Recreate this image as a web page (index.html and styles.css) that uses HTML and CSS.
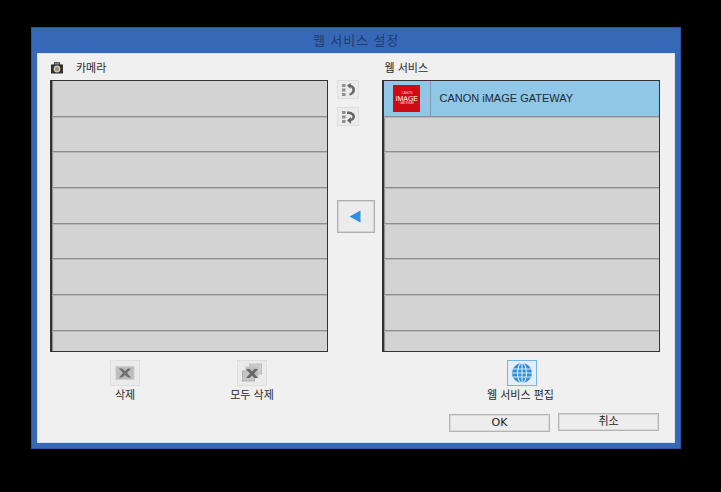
FILE: index.html
```html
<!DOCTYPE html>
<html lang="ko">
<head>
<meta charset="utf-8">
<title>웹 서비스 설정</title>
<link rel="stylesheet" href="styles.css">
</head>
<body>
<div class="window">
  <div class="titlebar">웹 서비스 설정</div>
  <div class="client">
    <div class="panes">
      <section class="pane">
        <div class="pane-label">
          <svg class="cam" width="14" height="13" viewBox="0 0 14 13"><path d="M1 3.500h2.500l1-2.500h5l1 2.500H13v9H1z" fill="#2e2e2e"/><path d="M5 1.500h4l.7 2H4.300z" fill="#888"/><circle cx="7" cy="8" r="3.400" fill="#c4c4c4"/><circle cx="7" cy="8" r="2" fill="#a8905f"/></svg>
          <span>카메라</span>
        </div>
        <div class="list">
          <div class="row"></div><div class="row"></div><div class="row"></div><div class="row"></div>
          <div class="row"></div><div class="row"></div><div class="row"></div><div class="row row-last"></div>
        </div>
      </section>
      <div class="middle">
        <div class="small-buttons">
          <div class="small-btn">
            <svg width="16" height="14" viewBox="0 0 16 14"><path d="M2 1h3.500v3H2zM2 5.500h3.500v3H2zM2 10h3.500v3H2z" fill="#8f8f8f"/><path d="M7 2.500 10.500 0v1.700c2.800.5 4.500 2.400 4.500 5 0 2.800-2 5-5.500 6V10.500c1.800-.7 2.800-2 2.800-3.800 0-1.400-.7-2.400-1.800-2.800V6z" fill="#666"/></svg>
          </div>
          <div class="small-btn">
            <svg width="16" height="14" viewBox="0 0 16 14"><path d="M2 1h3.500v3H2zM2 5.500h3.500v3H2zM2 10h3.500v3H2z" fill="#8f8f8f"/><path d="M7 1.500c4.500-.3 8 1.800 8 5 0 2.300-1.500 4-4 4.700V14L7 10.500 11 7v1.800c.9-.5 1.400-1.300 1.400-2.300 0-1.600-2.200-2.700-5.400-2.500z" fill="#666"/></svg>
          </div>
        </div>
        <div class="move-btn"><svg width="12" height="13" viewBox="0 0 12 13"><path d="M0.500 6.500 11.500 .5v12z" fill="#2f8fdc"/></svg></div>
      </div>
      <section class="pane pane-right">
        <div class="pane-label"><span>웹 서비스</span></div>
        <div class="list">
          <div class="row row-selected">
            <div class="logo-cell"><div class="logo"><span class="logo-top">CANON</span><span class="logo-main">iMAGE</span><span class="logo-top">GATEWAY</span></div></div>
            <div class="service-name">CANON iMAGE GATEWAY</div>
          </div>
          <div class="row"></div><div class="row"></div><div class="row"></div>
          <div class="row"></div><div class="row"></div><div class="row"></div><div class="row row-last"></div>
        </div>
      </section>
    </div>
    <div class="tools">
      <div class="tool tool-delete">
        <div class="tool-icon">
          <svg width="20" height="16" viewBox="0 0 20 16"><rect x="1" y="1.500" width="18" height="13" fill="#bdbdbd" stroke="#cbcbcb"/><path d="M4 3.500h3L10 6l3-2.500h3L12 8l4 4.500h-3L10 10l-3 2.500H4L8 8z" fill="#6e6e6e"/></svg>
        </div>
        <div class="tool-label">삭제</div>
      </div>
      <div class="tool tool-delete-all">
        <div class="tool-icon">
          <svg width="22" height="20" viewBox="0 0 22 20"><rect x="8.500" y="1" width="12" height="10" fill="#cdcdcd" stroke="#bdbdbd"/><rect x="5" y="4" width="12" height="10" fill="#bdbdbd" stroke="#c6c6c6"/><rect x="1.500" y="8" width="12" height="10" fill="#c6c6c6" stroke="#b0b0b0"/><path d="M5 6h3.500L11 8.500 13.500 6H17l-4 4.500 4 4.500h-3.500L11 12.500 8.500 15H5l4-4.500z" fill="#666"/></svg>
        </div>
        <div class="tool-label">모두 삭제</div>
      </div>
      <div class="tool tool-edit">
        <div class="tool-icon tool-icon-active">
          <svg width="22" height="22" viewBox="0 0 22 22"><circle cx="11" cy="11" r="10" fill="#2f8fd8"/><g fill="none" stroke="#d6ecfa" stroke-width="1.100"><ellipse cx="11" cy="11" rx="4.500" ry="10"/><path d="M11 1v20M1.800 7h18.400M1 11h20M1.800 15h18.400"/></g></svg>
        </div>
        <div class="tool-label tool-label-edit">웹 서비스 편집</div>
      </div>
    </div>
    <div class="actions">
      <button class="btn btn-ok" type="button">OK</button>
      <button class="btn btn-cancel" type="button">취소</button>
    </div>
  </div>
</div>
</body>
</html>
```
FILE: styles.css
```css
* { box-sizing: border-box; }
html, body { margin: 0; height: 100%; }
body {
  background: #000;
  padding: 27px 0 0 31px;
  font-family: "Noto Sans CJK KR", "Liberation Sans", sans-serif;
  font-size: 11px;
  color: #2a2a2a;
}
.window {
  width: 650px;
  height: 422px;
  background: #3768b8;
  border: 1px solid #2a57a0;
  padding: 0 5px 5px;
  display: flex;
  flex-direction: column;
}
.titlebar {
  height: 25px;
  line-height: 23px;
  text-align: center;
  font-size: 13px;
  color: #1f3c6c;
  letter-spacing: .9px;
}
.client {
  flex: 1;
  background: #f0f0f0;
  border: 1px solid #d9dfe9;
  padding: 0 14px 0 12px;
  display: flex;
  flex-direction: column;
}
.panes { display: flex; }
.pane { width: 278px; }
.pane-right { width: 278px; }
.pane-label {
  height: 26px;
  display: flex;
  align-items: center;
  font-size: 11px;
  line-height: 14px;
}
.pane-right .pane-label { padding-left: 2px; }
.cam { margin-right: 12px; }
.list {
  height: 272px;
  border: 1px solid #333;
  border-left-width: 2px;
  background: #d3d3d3;
  overflow: hidden;
  box-shadow: inset 2px 0 1px -1px #8a8a8a;
}
.row {
  height: 35.700px;
  border-bottom: 1px solid #8e8e8e;
  box-shadow: 0 1px 0 #b8b8b8;
  display: flex;
}
.row-last { border-bottom: 0; box-shadow: none; }
.row-selected { background: #90c6e6; }
.logo-cell {
  width: 47px;
  border-right: 1px solid #7f9db3;
  display: flex;
  align-items: center;
  padding-left: 9px;
}
.logo {
  width: 27px;
  height: 27px;
  background: #cf0a12;
  color: #f6d6d6;
  display: flex;
  flex-direction: column;
  align-items: center;
  justify-content: center;
  font-family: "Liberation Sans", sans-serif;
  line-height: 5px;
}
.logo-top { font-size: 3px; }
.logo-main { font-size: 7px; color: #fff; }
.service-name {
  padding-left: 8px;
  font-family: "Liberation Sans", sans-serif;
  font-size: 11px;
  line-height: 34px;
  color: #1d2a33;
}
.middle {
  width: 55px;
  padding: 26px 0 0 9px;
}
.small-buttons { display: flex; flex-direction: column; gap: 8px; }
.small-btn {
  width: 22px;
  height: 19px;
  background: #ebebeb;
  border: 1px solid #dedede;
  display: flex;
  align-items: center;
  justify-content: center;
}
.move-btn {
  width: 38px;
  height: 33px;
  margin-top: 74px;
  padding-right: 2px;
  background: #ececec;
  border: 1px solid #b0b0b0;
  box-shadow: inset 0 0 0 1px #d4d4d4;
  display: flex;
  align-items: center;
  justify-content: center;
}
.tools {
  display: flex;
  padding-top: 8px;
  height: 61px;
}
.tool {
  display: flex;
  flex-direction: column;
  align-items: center;
  width: 80px;
}
.tool-delete { margin-left: 35px; }
.tool-delete-all { margin-left: 47px; }
.tool-edit { margin-left: 175px; width: 110px; }
.tool-icon {
  width: 30px;
  height: 26px;
  background: #ebebeb;
  border: 1px solid #dedede;
  display: flex;
  align-items: center;
  justify-content: center;
}
.tool-icon-active {
  background: #e3eef8;
  border: 1px solid #6fb6ee;
}
.tool-label {
  line-height: 16px;
  font-size: 11px;
}
.tool-label-edit { margin-right: 3px; }
.actions {
  display: flex;
  justify-content: flex-end;
  gap: 8px;
  padding-right: 1px;
  align-items: flex-start;
}
.btn {
  width: 101px;
  height: 18px;
  padding: 0;
  border: 1px solid #b4b4b4;
  box-shadow: inset 0 0 0 1px #dadada;
  border-radius: 0;
  background: #ededed;
  color: #222;
  font: 11px/14px "DejaVu Sans", "Noto Sans CJK KR", sans-serif;
}
.btn-ok { margin-top: 1px; }
```
